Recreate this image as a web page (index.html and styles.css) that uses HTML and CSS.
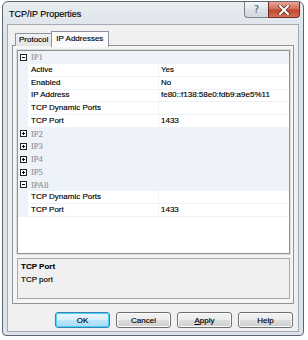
FILE: index.html
```html
<!DOCTYPE html>
<html>
  <head>
    <title>TCP/IP Properties</title>
    <link rel="stylesheet" href="styles.css">
  </head>
  <body>
    <div class="window">
      <div class="titlebar">
        <span class="title">TCP/IP Properties</span>
        <div class="caption-buttons">
          <div class="cap-btn help">?</div>
          <div class="cap-btn close">
            <svg width="12" height="10" viewBox="0 0 12 10">
              <path d="M2 1 L10 9 M10 1 L2 9" stroke="#5b2a22" stroke-width="3.4" stroke-linecap="square"/>
              <path d="M2 1 L10 9 M10 1 L2 9" stroke="#fff" stroke-width="2" stroke-linecap="square"/>
            </svg>
          </div>
        </div>
      </div>

      <div class="client">
        <div class="tabs">
          <div class="tab">Protocol</div>
          <div class="tab active">IP Addresses</div>
        </div>

        <div class="tab-panel">
          <div class="grid">
            <div class="row cat"><span class="margin"><i class="box minus"></i></span><span class="cat-name">IP1</span></div>
            <div class="row"><span class="margin"></span><span class="name">Active</span><span class="value">Yes</span></div>
            <div class="row"><span class="margin"></span><span class="name">Enabled</span><span class="value">No</span></div>
            <div class="row"><span class="margin"></span><span class="name">IP Address</span><span class="value">fe80::f138:58e0:fdb9:a9e5%11</span></div>
            <div class="row"><span class="margin"></span><span class="name">TCP Dynamic Ports</span><span class="value"></span></div>
            <div class="row"><span class="margin"></span><span class="name">TCP Port</span><span class="value">1433</span></div>
            <div class="row cat"><span class="margin"><i class="box plus"></i></span><span class="cat-name">IP2</span></div>
            <div class="row cat"><span class="margin"><i class="box plus"></i></span><span class="cat-name">IP3</span></div>
            <div class="row cat"><span class="margin"><i class="box plus"></i></span><span class="cat-name">IP4</span></div>
            <div class="row cat"><span class="margin"><i class="box plus"></i></span><span class="cat-name">IP5</span></div>
            <div class="row cat"><span class="margin"><i class="box minus"></i></span><span class="cat-name">IPAll</span></div>
            <div class="row"><span class="margin"></span><span class="name">TCP Dynamic Ports</span><span class="value"></span></div>
            <div class="row"><span class="margin"></span><span class="name">TCP Port</span><span class="value">1433</span></div>
          </div>

          <div class="desc">
            <div class="desc-title">TCP Port</div>
            <div class="desc-text">TCP port</div>
          </div>
        </div>

        <div class="buttons">
          <button class="btn default">OK</button>
          <button class="btn">Cancel</button>
          <button class="btn"><u>A</u>pply</button>
          <button class="btn">Help</button>
        </div>
      </div>
    </div>
  </body>
</html>
```

FILE: styles.css
```css
/* dialog window */
body {
  font-family: "Liberation Sans", Arial, sans-serif;
  font-size: 8px;
  margin: 0;
  background: #fff;
}

.window {
  margin: 1px 0 0 2px;
  width: 302px;
  height: 335px;
  box-sizing: border-box;
  border: 1px solid #5e6670;
  border-radius: 6px 6px 4px 4px;
  background: linear-gradient(#e9edf1, #dde3ea 30px, #dde3ea);
  padding: 0 4px 3px 4px;
  display: flex;
  flex-direction: column;
}

.titlebar {
  height: 22px;
  display: flex;
  align-items: flex-start;
  justify-content: space-between;
  flex-shrink: 0;
}

.title {
  font-size: 9px;
  color: #000;
  margin: 7px 0 0 2px;
  -webkit-text-stroke: 0.15px #000;
}

.caption-buttons {
  display: flex;
  margin-right: -1px;
}

.cap-btn {
  height: 16px;
  box-sizing: border-box;
  border: 1px solid #7a838f;
  border-top: none;
  display: flex;
  align-items: center;
  justify-content: center;
}

.help {
  width: 24px;
  border-radius: 0 0 0 4px;
  border-right: none;
  background: linear-gradient(#f3f5f7, #dfe3e8 50%, #d2d7dd);
  color: #4c5561;
  font-family: "DejaVu Sans", sans-serif;
  font-size: 10px;
}

.close {
  width: 32px;
  border-radius: 0 0 4px 0;
  border-color: #6d2b22;
  background: linear-gradient(#e8a596, #d0705c 45%, #c3462f 55%, #d2705a);
}

.client {
  flex: 1;
  background: #f0f0f0;
  border: 1px solid #a2a9b2;
  padding: 6px 4px 0 4px;
  display: flex;
  flex-direction: column;
  -webkit-text-stroke: 0.15px currentColor;
}

/* tabs */
.tabs {
  display: flex;
  height: 14px;
  padding-left: 3px;
  position: relative;
  z-index: 1;
}

.tab {
  margin-top: 2px;
  height: 12px;
  padding: 0 3px;
  border: 1px solid #8d939c;
  border-bottom: none;
  background: linear-gradient(#f2f2f2, #e4e4e4);
  line-height: 12px;
  color: #000;
}

.tab.active {
  margin-top: 0;
  height: 15px;
  margin-left: -1px;
  padding: 0 5px 0 4px;
  background: #fbfbfb;
  line-height: 13px;
}

.tab-panel {
  height: 259px;
  box-sizing: border-box;
  border: 1px solid #8d939c;
  background: #f5f5f5;
  padding: 4px 3px 3px 4px;
  display: flex;
  flex-direction: column;
  gap: 4px;
}

/* property grid */
.grid {
  height: 204px;
  box-sizing: border-box;
  border: 1px solid #8f949b;
  background: #fff;
  outline: 1px solid #dcdcdc;
  outline-offset: 0;
}

.row {
  display: grid;
  grid-template-columns: 10px 130px 1fr;
  height: 12.75px;
  line-height: 12px;
  color: #000;
}

.row .margin {
  background: #eef2f9;
  display: flex;
  align-items: center;
  justify-content: center;
}

.row .name {
  padding-left: 3px;
  border-bottom: 1px solid #eef2f9;
  white-space: nowrap;
}

.row .value {
  padding-left: 2px;
  border-left: 1px solid #eef2f9;
  border-bottom: 1px solid #eef2f9;
  white-space: nowrap;
}

.row.cat {
  background: #eef2f9;
}

.cat-name {
  grid-column: 2 / 4;
  padding-left: 3px;
  color: #8e949c;
  font-family: "Liberation Serif", serif;
  font-size: 8.5px;
}

.box {
  width: 7px;
  height: 7px;
  box-sizing: border-box;
  border: 1px solid #222;
  background: #fff;
  position: relative;
  margin-left: 1px;
}

.box::before {
  content: "";
  position: absolute;
  left: 1px;
  top: 2px;
  width: 3px;
  height: 1px;
  background: #000;
}

.box.plus::after {
  content: "";
  position: absolute;
  left: 2px;
  top: 1px;
  width: 1px;
  height: 3px;
  background: #000;
}

/* description */
.desc {
  height: 41px;
  box-sizing: border-box;
  border: 1px solid #a8a8a8;
  background: #f0f0f0;
  padding: 2px 3px;
  line-height: 12.5px;
}

.desc-title {
  font-weight: bold;
}

/* buttons */
.buttons {
  display: flex;
  justify-content: flex-end;
  gap: 6px;
  margin-top: 8px;
  padding-right: 1px;
}

.btn {
  width: 55px;
  height: 16px;
  padding: 0;
  font-family: "Liberation Sans", Arial, sans-serif;
  font-size: 8px;
  color: #000;
  border: 1px solid #707070;
  border-radius: 3px;
  background: linear-gradient(#f2f2f2, #ebebeb 50%, #dddddd 50%, #cfcfcf);
  box-shadow: inset 0 0 0 1px #fcfcfc;
  -webkit-text-stroke: 0.15px #000;
}

.btn.default {
  border-color: #3c7fb1;
  background: linear-gradient(#eaf6fd, #d9f0fc 50%, #bee6fd 50%, #a7d9f5);
  box-shadow: inset 0 0 0 1px #48d2f8;
}
```
